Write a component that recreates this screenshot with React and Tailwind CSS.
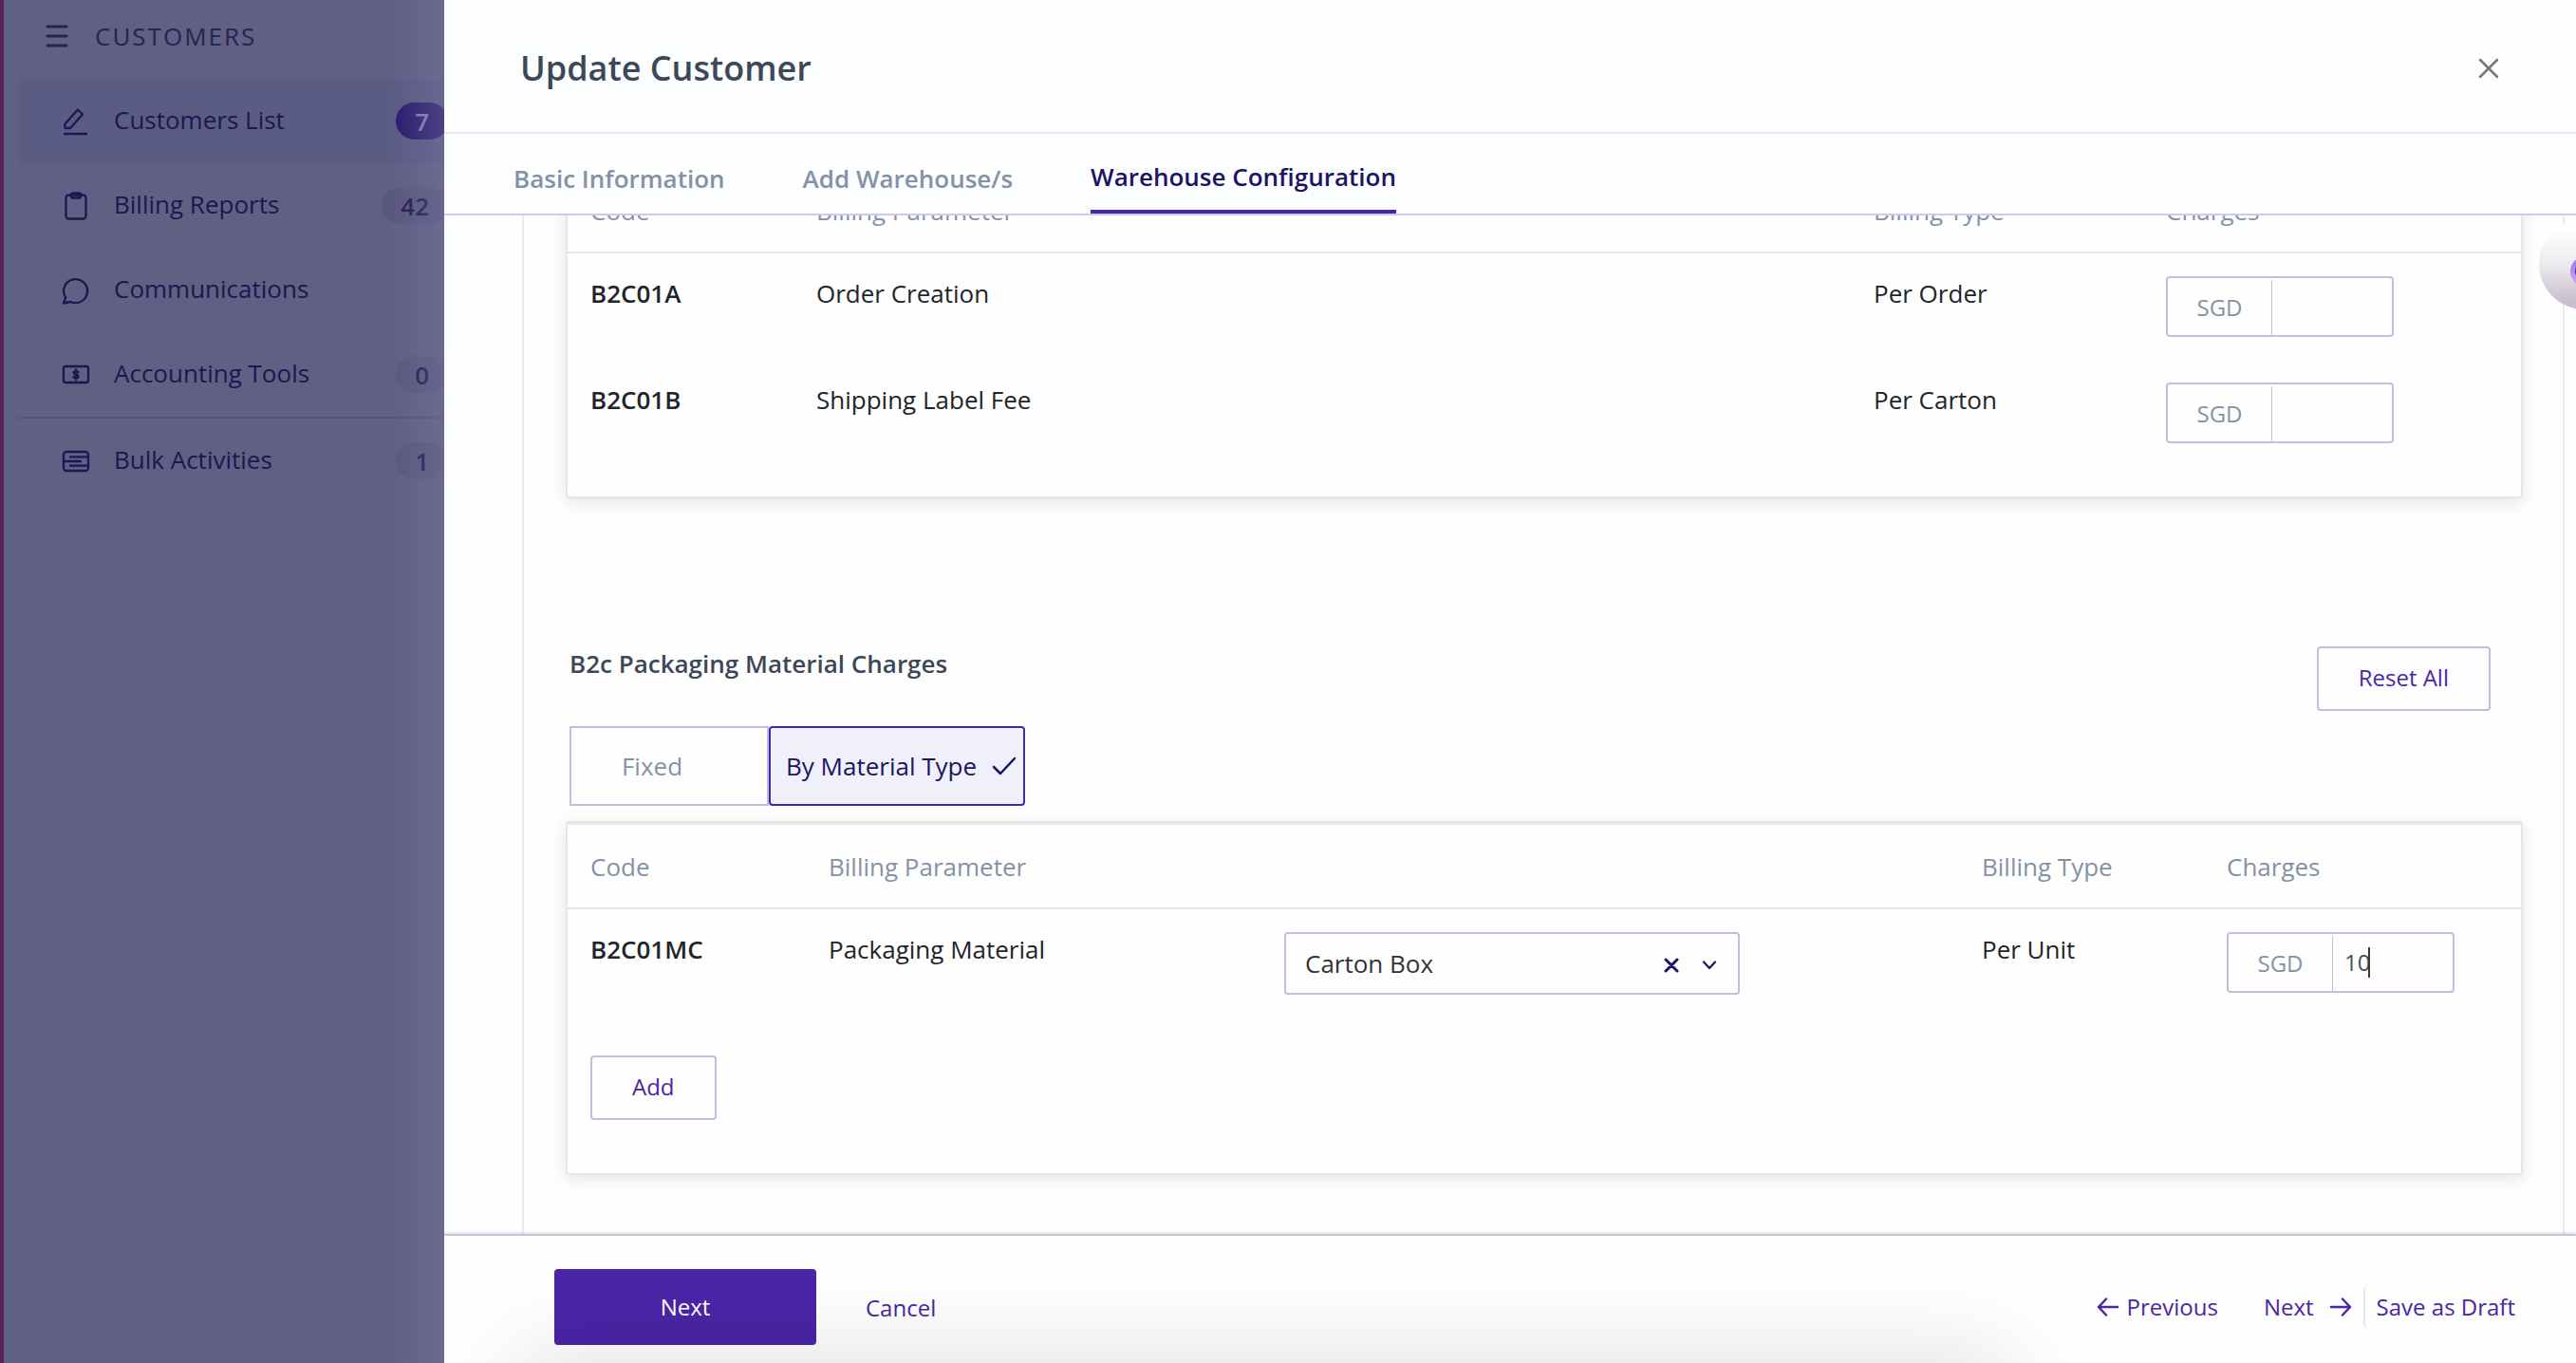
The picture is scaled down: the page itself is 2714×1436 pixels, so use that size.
import React, { useState } from "react";

const menu = [
    { icon: "edit", label: "Customers List", count: 7, active: true },
    { icon: "clipboard", label: "Billing Reports", count: 42 },
    { icon: "chat", label: "Communications" },
    { icon: "money", label: "Accounting Tools", count: 0 },
    { icon: "bulk", label: "Bulk Activities", count: 1, divider: true },
];

const tabs = ["Basic Information", "Add Warehouse/s", "Warehouse Configuration"];

const fulfilmentRows = [
    { code: "B2C01A", name: "Order Creation", type: "Per Order" },
    { code: "B2C01B", name: "Shipping Label Fee", type: "Per Carton" },
];

const icons = {
    edit: (
        <>
            <path d="M3.500 22V17.500L17 2.500L22 7.500L9 22Z" />
            <path d="M3 28H26" />
        </>
    ),
    clipboard: (
        <>
            <rect x="4.500" y="3.500" width="21" height="25" rx="3" />
            <rect x="10" y="1.500" width="10" height="5" rx="1.500" />
        </>
    ),
    chat: <path d="M2 28.500L4.200 22.500A12.500 12.500 0 1 1 9.500 27Z" />,
    money: (
        <>
            <rect x="2" y="6" width="26" height="17" rx="2" />
            <path d="M17.500 12.200C16.500 10.800 12.700 10.800 12.700 12.900C12.700 15 17.500 14 17.500 16.400C17.500 18.500 13.500 18.500 12.400 17M15 9.500V20" />
        </>
    ),
    bulk: (
        <>
            <rect x="2" y="5" width="26" height="20" rx="3" />
            <path d="M9 10.300H28M2 15H20M9 19.700H28" />
        </>
    ),
};

const MenuIcon = ({ name }) => (
    <svg viewBox="0 0 30 30" className="size-[30px] shrink-0" fill="none" stroke="currentColor" strokeWidth="2.300" strokeLinecap="round" strokeLinejoin="round">
        {icons[name]}
    </svg>
);

const Arrow = ({ className }) => (
    <svg viewBox="0 0 24 20" className={`h-5 w-6 ${className || ""}`} fill="none" stroke="currentColor" strokeWidth="2.500" strokeLinecap="round" strokeLinejoin="round">
        <path d="M2 10H22M14 1.500L22 10L14 18.500" />
    </svg>
);

const Sidebar = () => (
    <aside className="relative w-[468px] shrink-0 overflow-hidden border-l-4 border-[#5a215a] bg-[#605f84] text-[26px] text-[#1b1750]">
        <header className="flex h-[83px] items-center gap-7 pb-2 pl-11 text-[#272352]">
            <svg viewBox="0 0 24 24" className="size-6" stroke="currentColor" strokeWidth="3" strokeLinecap="round">
                <path d="M2 2H22M2 12H22M2 22H22" />
            </svg>
            <h1 className="tracking-[2px]">CUSTOMERS</h1>
        </header>
        <nav className="ml-4">
            {menu.map((item) => (
                <a
                    key={item.label}
                    href="#"
                    className={`flex w-[464px] items-center ${item.active ? "bg-[#5a5c84]" : ""} ${item.divider ? "h-[91px] border-t-2 border-[#565384]" : "h-[89px]"}`}
                >
                    <span className="flex w-[452px] items-center pl-[45px]">
                        <MenuIcon name={item.icon} />
                        <span className="ml-[25px] pb-1">{item.label}</span>
                        {item.count !== undefined && (
                            <span
                                className={`ml-auto flex h-[39px] items-center rounded-full px-5 font-semibold ${item.active ? "bg-[#2b1c6e] text-[#8583b4]" : "bg-[#5b587f] text-[#1f1a52]"}`}
                            >
                                {item.count}
                            </span>
                        )}
                    </span>
                </a>
            ))}
        </nav>
        <div className="absolute inset-y-0 right-0 w-14 bg-gradient-to-r from-[#7d7aa6]/0 to-[#7d7aa6]/40"></div>
    </aside>
);

const ChargeInput = ({ label, defaultValue, focused }) => (
    <label className="relative flex h-16 w-[240px] items-stretch rounded border-2 border-[#bfbfe3] text-[24px]">
        <span className="mt-0.5 flex w-[110px] shrink-0 items-center justify-center border-r border-[#bfbfe3] text-[#8492a6]">SGD</span>
        <input type="text" aria-label={label} defaultValue={defaultValue} className="w-full min-w-0 bg-transparent px-3 text-[#495057] outline-none" />
        {focused && <span className="absolute top-3.5 left-[147px] h-8 w-0.5 bg-[#343a40]"></span>}
    </label>
);

const OutlineButton = ({ children }) => (
    <button type="button" className="h-[68px] rounded border-2 border-[#bfbfe3] px-[42px] pb-0.5 text-[24px] text-[#4a25a6]">
        {children}
    </button>
);

const Card = ({ children, className }) => (
    <section className={`rounded border-2 border-t-4 border-[#e2e7ee] bg-[#fefefe] shadow-[0_4px_16px_rgba(60,72,100,0.14)] ${className}`}>{children}</section>
);

const table = "w-full table-fixed border-separate border-spacing-0";
const th = "h-[89px] border-b-2 border-[#e2e7ee] pl-6 text-left font-medium text-[#8492a6]";
const td = "h-28 pt-6 pl-6 text-left align-top";

const App = () => {
    const [tab, setTab] = useState(2);

    return (
        <div className="flex h-screen overflow-hidden bg-[#605f84] font-['Open_Sans',sans-serif] text-[26px] leading-9 text-[#212529]">
            <Sidebar />

            <main className="relative flex min-w-0 flex-1 flex-col bg-[#fcfdff]">
                <header className="flex h-[141px] shrink-0 items-center justify-between border-b-2 border-[#e8e6f6] px-20 pt-1">
                    <h2 className="text-[36px] font-semibold text-[#3c4858]">Update Customer</h2>
                    <button type="button" aria-label="Close">
                        <svg viewBox="0 0 24 24" className="size-6" stroke="#777777" strokeWidth="2.500" strokeLinecap="round">
                            <path d="M3 3L21 21M21 3L3 21" />
                        </svg>
                    </button>
                </header>

                <nav className="flex h-[86px] shrink-0 gap-[82px] border-b-2 border-[#d0caf3] pl-[73px] font-semibold">
                    {tabs.map((name, i) => (
                        <button
                            key={name}
                            type="button"
                            onClick={() => setTab(i)}
                            className={i === tab ? "border-b-4 border-[#4a25a6] pt-2.5 text-[#1b1464]" : "pt-2.5 text-[#8492a6]"}
                        >
                            {name}
                        </button>
                    ))}
                </nav>

                <div className="min-h-0 flex-1 overflow-hidden pr-3 pl-[82px]">
                    {/* list is scrolled down a little, the first header sits half under the tabs */}
                    <div className="-mt-[53px] border-x-2 border-[#e9e9f5] bg-[#fefefe] pr-[42px] pb-20 pl-11">
                        <Card className="pb-8">
                            <table className={table}>
                                <thead>
                                    <tr>
                                        <th className={`${th} w-[238px]`}>Code</th>
                                        <th className={th}>Billing Parameter</th>
                                        <th className={`${th} w-[308px]`}>Billing Type</th>
                                        <th className={`${th} w-[398px]`}>Charges</th>
                                    </tr>
                                </thead>
                                <tbody>
                                    {fulfilmentRows.map((row) => (
                                        <tr key={row.code}>
                                            <th className={`${td} font-semibold`}>{row.code}</th>
                                            <td className={td}>{row.name}</td>
                                            <td className={td}>{row.type}</td>
                                            <td className={td}>
                                                <ChargeInput label={`${row.name} charge in SGD`} defaultValue="" />
                                            </td>
                                        </tr>
                                    ))}
                                </tbody>
                            </table>
                        </Card>

                        <div className="mt-[156px] flex items-start justify-between pr-[34px] pl-1">
                            <h3 className="font-semibold text-[#3c4858]">B2c Packaging Material Charges</h3>
                            <OutlineButton>Reset All</OutlineButton>
                        </div>

                        <div className="mt-4 flex h-[84px] pl-1">
                            <button type="button" className="w-[210px] border-2 border-[#bfbfe3] pr-9 text-[#8492a6]">
                                Fixed
                            </button>
                            <button type="button" className="flex w-[270px] items-center gap-4 rounded border-2 border-[#4a25a6] bg-[#f0f0fa] pl-4 text-[#1b1464]">
                                By Material Type
                                <svg viewBox="0 0 26 20" className="h-5 w-[26px]" fill="none" stroke="currentColor" strokeWidth="2.500" strokeLinecap="round" strokeLinejoin="round">
                                    <path d="M2 11L9 18L24 2" />
                                </svg>
                            </button>
                        </div>

                        <Card className="mt-4 pb-14">
                            <table className={table}>
                                <thead>
                                    <tr>
                                        <th className={`${th} w-[251px]`}>Code</th>
                                        <th className={`${th} w-[480px]`}>Billing Parameter</th>
                                        <th className={th}></th>
                                        <th className={`${th} w-[258px]`}>Billing Type</th>
                                        <th className={`${th} w-[334px]`}>Charges</th>
                                    </tr>
                                </thead>
                                <tbody>
                                    <tr>
                                        <th className={`${td} font-semibold`}>B2C01MC</th>
                                        <td className={td}>Packaging Material</td>
                                        <td className={td}>
                                            <div className="relative w-[480px]">
                                                <select aria-label="Packaging material" className="block h-[66px] w-full appearance-none rounded border-2 border-[#bfbfe3] bg-transparent px-5 text-[#333333]">
                                                    <option>Carton Box</option>
                                                </select>
                                                <button type="button" aria-label="Clear" className="absolute top-[27px] right-16 text-[#1b1464]">
                                                    <svg viewBox="0 0 16 16" className="size-4" stroke="currentColor" strokeWidth="3" strokeLinecap="round">
                                                        <path d="M2 2L14 14M14 2L2 14" />
                                                    </svg>
                                                </button>
                                                <svg viewBox="0 0 16 10" className="pointer-events-none absolute top-[30px] right-6 h-2.5 w-4" fill="none" stroke="#1b1464" strokeWidth="2.200" strokeLinecap="round" strokeLinejoin="round">
                                                    <path d="M2 1.500L8 8L14 1.500" />
                                                </svg>
                                            </div>
                                        </td>
                                        <td className={td}>Per Unit</td>
                                        <td className={td}>
                                            <ChargeInput label="Packaging material charge in SGD" defaultValue="10" focused />
                                        </td>
                                    </tr>
                                </tbody>
                            </table>
                            <div className="mt-[42px] flex pl-6">
                                <OutlineButton>Add</OutlineButton>
                            </div>
                        </Card>
                    </div>
                </div>

                <footer className="flex h-[136px] shrink-0 items-center justify-between border-t-2 border-[#c3c8d6] bg-[#fefefe] pt-4 pr-16 pl-[116px] text-[24px] text-[#4a25a6] shadow-[0_-1px_3px_rgba(60,72,100,0.2)]">
                    <div className="flex items-center gap-[52px]">
                        <button type="button" className="h-20 w-[276px] rounded bg-[#4a25a6] text-white">
                            Next
                        </button>
                        <button type="button" className="pt-0.5">
                            Cancel
                        </button>
                    </div>
                    <div className="flex items-center">
                        <button type="button" className="flex items-center gap-2">
                            <Arrow className="rotate-180" />
                            Previous
                        </button>
                        <button type="button" className="ml-12 flex items-center gap-4">
                            Next
                            <Arrow />
                        </button>
                        <button type="button" className="ml-3 h-[46px] rounded-md border-l-2 border-[#e2e7ee] pl-3">
                            Save as Draft
                        </button>
                    </div>
                </footer>

                <div className="pointer-events-none absolute inset-x-0 bottom-0 h-28 overflow-hidden">
                    <div className="absolute top-full right-[600px] left-20 h-24 shadow-[0_0_100px_rgba(0,0,0,0.14)]"></div>
                </div>

                {/* assistant bubble peeking in from the right edge */}
                <div className="absolute top-[230px] right-0 h-24 w-[39px] overflow-hidden">
                    <div className="absolute top-0 left-0 size-24 rounded-full bg-gradient-to-b from-white from-10% via-[#ececee] via-50% to-[#c9bfd0] to-90%"></div>
                    <div className="absolute top-10 left-[33px] size-8 rounded-full bg-gradient-to-b from-[#8a74f0] to-[#e6a3f5] p-[5px]">
                        <div className="size-full rounded-full bg-[#3b2a6c]"></div>
                    </div>
                </div>
            </main>
        </div>
    );
};

export default App;
